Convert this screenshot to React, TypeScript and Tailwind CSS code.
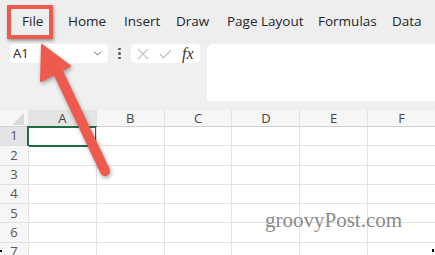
import { ChevronDown } from 'lucide-react'

const tabs = [
  { label: 'File', w: 'w-[46px]' },
  { label: 'Home', w: 'w-[56px]' },
  { label: 'Insert', w: 'w-[52px]' },
  { label: 'Draw', w: 'w-[51px]' },
  { label: 'Page Layout', w: 'w-[91px]' },
  { label: 'Formulas', w: 'w-[74px]' },
  { label: 'Data', w: 'w-[44px]' },
]
const cols = ['A', 'B', 'C', 'D', 'E', 'F']
const rows = [1, 2, 3, 4, 5, 6, 7]

export default function App() {
  return (
    <div
      className="relative w-[435px] h-[255px] overflow-hidden bg-[#f0f0f0] text-[#262626]"
      style={{ fontFamily: '"Open Sans", "Noto Sans", sans-serif' }}
    >
      {/* Ribbon tabs */}
      <div className="h-[43px] flex items-center pl-[22px] text-[13.5px] bg-[#eeeeee] whitespace-nowrap">
        {tabs.map((t) => (
          <span key={t.label} className={`${t.w} shrink-0 leading-none`}>
            {t.label}
          </span>
        ))}
      </div>

      {/* Name box + formula bar */}
      <div className="flex h-[58px] pl-[10px] pt-[1px]">
        <div className="w-[98px] h-[19px] bg-white rounded-[4px] flex items-center justify-between pl-[3px] pr-[4px] text-[13px]">
          <span>A1</span>
          <ChevronDown size={13} strokeWidth={1.5} className="text-[#444]" />
        </div>
        <div className="w-[23px] h-[19px] flex flex-col items-center justify-center gap-[2px]">
          <span className="w-[2.5px] h-[2.5px] rounded-full bg-[#555]" />
          <span className="w-[2.5px] h-[2.5px] rounded-full bg-[#555]" />
          <span className="w-[2.5px] h-[2.5px] rounded-full bg-[#555]" />
        </div>
        <div className="w-[69px] h-[19px] bg-white rounded-[4px] flex items-center pl-[6px] gap-[10px]">
          <svg width="12" height="12" viewBox="0 0 12 12" className="shrink-0">
            <path d="M1 1 L11 11 M11 1 L1 11" stroke="#c4c4c4" strokeWidth="1.2" fill="none" />
          </svg>
          <svg width="13" height="10" viewBox="0 0 13 10" className="shrink-0">
            <path d="M1 5 L4.5 9 L12 1" stroke="#c4c4c4" strokeWidth="1.2" fill="none" />
          </svg>
          <span
            className="italic text-[16px] leading-none text-[#333]"
            style={{ fontFamily: '"Liberation Serif", serif' }}
          >
            fx
          </span>
        </div>
        <div className="ml-[7px] flex-1 h-[57px] bg-white rounded-tl-[6px]" />
      </div>

      {/* Sheet */}
      <div className="mt-[9px]">
        <div className="flex h-[17px] bg-[#f6f6f6] border-b border-[#cfcfcf] shadow-[0_1px_2px_rgba(0,0,0,0.12)] text-[13px] text-[#444]">
          <div className="w-[28px] relative">
            <svg width="28" height="17" className="absolute inset-0">
              <polygon points="24,3 24,15 12,15" fill="#dadada" />
            </svg>
          </div>
          {cols.map((c) => (
            <div
              key={c}
              className={`w-[68px] flex items-center justify-center border-l border-[#e2e2e2] leading-none ${
                c === 'A' ? 'bg-[#e4e4e4]' : ''
              }`}
            >
              {c}
            </div>
          ))}
        </div>
        {rows.map((r) => (
          <div key={r} className="flex h-[19.3px] bg-white">
            <div
              className={`w-[28px] flex items-center justify-center text-[13px] text-[#555] border-b border-[#e2e2e2] ${
                r === 1 ? 'bg-[#e4e4e4]' : 'bg-[#f6f6f6]'
              }`}
            >
              {r}
            </div>
            {cols.map((c) => (
              <div
                key={c}
                className={`w-[68px] border-l border-b border-[#e2e2e2] ${
                  r === 1 && c === 'A' ? 'outline-2 outline-[#1f6b42] -outline-offset-1' : ''
                }`}
              />
            ))}
          </div>
        ))}
      </div>

      {/* Highlight around File tab */}
      <div className="absolute left-[7px] top-[5px] w-[46px] h-[34px] border-[4px] border-[#ef5a4f] shadow-[1px_2px_3px_rgba(0,0,0,0.35)]" />

      {/* Arrow */}
      <svg
        width="435"
        height="255"
        className="absolute inset-0 pointer-events-none"
        style={{ filter: 'drop-shadow(1px 2px 2px rgba(0,0,0,0.35))' }}
      >
        <line x1="58" y1="72" x2="105" y2="171" stroke="#ef5a4f" strokeWidth="10" strokeLinecap="round" />
        <polygon points="42,45 70,66 41,81" fill="#ef5a4f" strokeLinejoin="round" stroke="#ef5a4f" strokeWidth="2" />
      </svg>

      {/* Watermark */}
      <div
        className="absolute left-[265px] top-[205px] text-[21px] text-[#8a8a8a] whitespace-nowrap"
        style={{ fontFamily: '"Liberation Serif", serif' }}
      >
        groovyPost.com
      </div>

      <div className="absolute left-0 bottom-[3px] w-[2px] h-[2px] bg-black" />
      <div className="absolute right-[1px] bottom-[3px] w-[2px] h-[3px] bg-black" />
    </div>
  )
}
